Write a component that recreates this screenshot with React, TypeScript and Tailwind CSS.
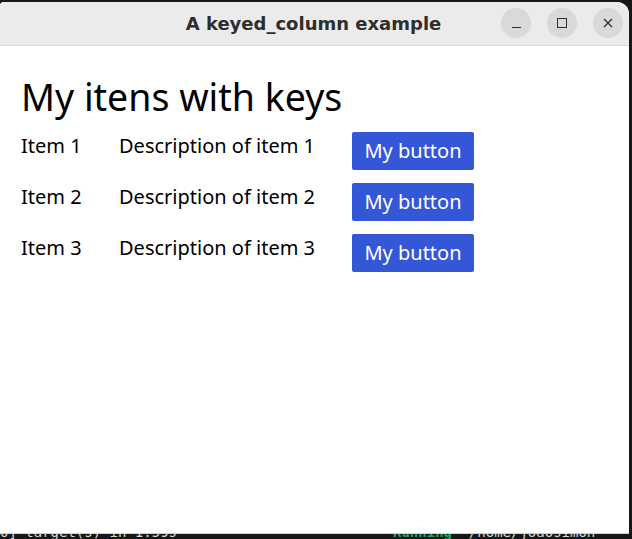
import React from 'react';

const items = [
  { id: 1, name: 'Item 1', description: 'Description of item 1' },
  { id: 2, name: 'Item 2', description: 'Description of item 2' },
  { id: 3, name: 'Item 3', description: 'Description of item 3' },
];

const App = () => {
  return (
    <div className="w-[632px] h-[539px] bg-[#171717] flex flex-col overflow-hidden">
      <div className="pt-[2px] pr-[3px] flex-1 flex flex-col">
        {/* Window */}
        <div className="flex-1 flex flex-col bg-white rounded-tr-[12px] rounded-tl-[4px] overflow-hidden border-b border-[#d0d0d0]">
          {/* Title bar */}
          <div className="relative h-[44px] shrink-0 bg-[#ebebeb] border-b border-[#d8d8d8] flex items-center justify-center">
            <span className="text-[18px] font-bold text-[#2e2e2e] font-['DejaVu_Sans',sans-serif] pr-[2px]">
              A keyed_column example
            </span>
            <div className="absolute right-[6px] top-[6px] flex gap-[16px]">
              <div className="w-[30px] h-[30px] rounded-full bg-[#d9d9d9] flex items-center justify-center">
                <div className="w-[9px] h-[1.5px] bg-[#2e2e2e] mt-[9px]" />
              </div>
              <div className="w-[30px] h-[30px] rounded-full bg-[#d9d9d9] flex items-center justify-center">
                <div className="w-[10px] h-[10px] border border-[#2e2e2e]" />
              </div>
              <div className="w-[30px] h-[30px] rounded-full bg-[#d9d9d9] flex items-center justify-center">
                <svg width="10" height="10" viewBox="0 0 10 10" fill="none" stroke="#2e2e2e" strokeWidth="1.3">
                  <path d="M1 1L9 9M9 1L1 9" />
                </svg>
              </div>
            </div>
          </div>

          {/* Content */}
          <div className="flex-1 px-[21px] pt-[25px] font-['Noto_Sans',sans-serif] text-black">
            <h1 className="text-[37.5px] leading-[52px]">My itens with keys</h1>
            <div className="flex flex-col gap-[13px] mt-[9px]">
              {items.map((item) => (
                <div key={item.id} className="flex items-start">
                  <span className="w-[98px] text-[20px] leading-[26px] pt-[1px]">{item.name}</span>
                  <span className="w-[233px] text-[20px] leading-[26px] pt-[1px]">{item.description}</span>
                  <button className="w-[122px] h-[38px] bg-[#3457d8] text-white text-[20px] rounded-[2px] flex items-center justify-center">
                    My button
                  </button>
                </div>
              ))}
            </div>
          </div>
        </div>
      </div>
      {/* Terminal strip below the window */}
      <div className="h-[5px] shrink-0 overflow-hidden relative font-['DejaVu_Sans_Mono',monospace] text-[14px] leading-[14px]">
        <div className="absolute top-[-9px] left-0 flex w-full text-[#d8d8d8]">
          <span className="w-[393px] whitespace-pre">0] target(s) in 1.59s</span>
          <span className="text-[#26a269] font-bold whitespace-pre">Running </span>
          <span className="whitespace-pre">`/home/joaosimon</span>
        </div>
      </div>
    </div>
  );
};

export default App;
